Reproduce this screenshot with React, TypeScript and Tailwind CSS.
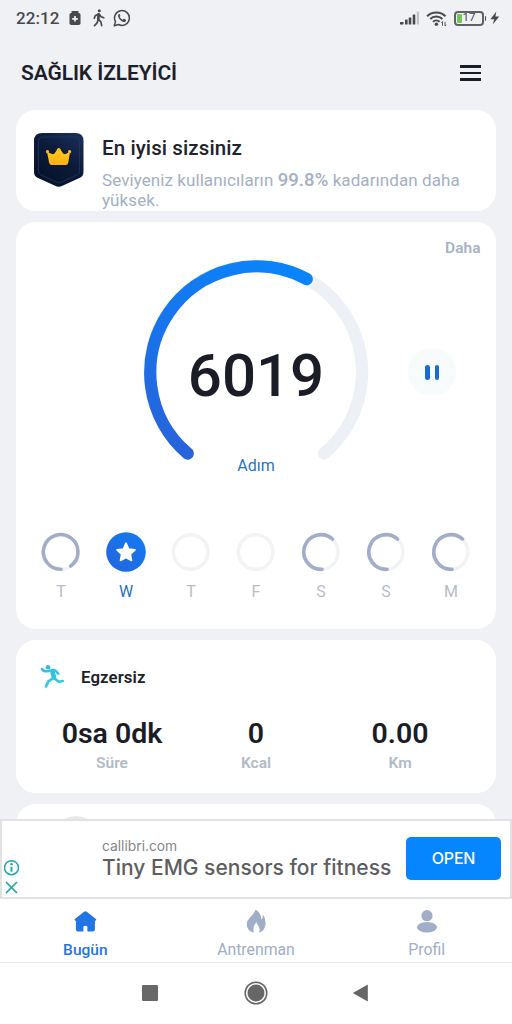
import type { ReactNode } from "react";

type Day = { label: string; kind: "arc" | "today" | "empty"; arc?: string };

const days: Day[] = [
  { label: "T", kind: "arc", arc: "M20.5 37.2 A17.3 17.3 0 1 1 30.2 34" },
  { label: "W", kind: "today" },
  { label: "T", kind: "empty" },
  { label: "F", kind: "empty" },
  { label: "S", kind: "arc", arc: "M21.5 37.3 A17.3 17.3 0 1 1 32 7" },
  { label: "S", kind: "arc", arc: "M21.5 37.3 A17.3 17.3 0 1 1 32 7" },
  { label: "M", kind: "arc", arc: "M21.5 37.3 A17.3 17.3 0 1 1 32 7" },
];

function StatusBar() {
  return (
    <header className="flex h-9 shrink-0 items-center justify-between pr-3 pl-4 text-[#48494c]">
      <div className="flex items-center">
        <span className="w-[53px] text-[17px] leading-9 font-medium tracking-[0.1px]">22:12</span>
        <svg width="12" height="16" viewBox="0 0 12 16" fill="currentColor">
          <rect x="2.5" y="1" width="7" height="2" rx=".6" />
          <rect x=".5" y="3" width="11" height="12" rx="1.8" />
          <path d="M6 6v5.6M3.2 8.8h5.6" stroke="#eff1f5" strokeWidth="1.7" />
        </svg>
        <svg className="ml-3" width="12" height="18" viewBox="0 0 12 18" fill="none" stroke="currentColor" strokeWidth="1.7" strokeLinecap="round" strokeLinejoin="round">
          <circle cx="6.3" cy="1.8" r="1.5" fill="currentColor" stroke="none" />
          <path d="M5.6 5.2 4.8 10l3 2.6.9 4M4.9 11.3l-.8 2.6-2.6 2.8M5.4 5 2.2 6.7l-.9 2.6M6.3 5.2l1.8 2.6 2.7 1" />
          <path d="M5.8 5.5 5.3 10" strokeWidth="2.6" />
        </svg>
        <svg className="ml-2" width="18" height="18" viewBox="0 0 18 18" fill="none">
          <path d="M1.3 16.7 2.5 12.6A7.4 7.4 0 1 1 5.5 15.5Z" stroke="currentColor" strokeWidth="1.5" strokeLinejoin="round" />
          <path d="M6.2 5.1c-.9.5-1.4 1.4-1 2.7.7 2.6 2.8 4.6 5.3 5.1 1.2.2 2.2-.4 2.5-1.5.1-.5-.1-.7-.5-.9l-1.3-.7c-.4-.2-.6 0-.9.4-.4.5-.6.6-1.1.3-1-.5-1.8-1.3-2.3-2.2-.3-.4 0-.6.3-1 .2-.3.3-.5.1-.9l-.5-1.1c-.2-.3-.4-.3-.6-.2Z" fill="currentColor" />
        </svg>
      </div>
      <div className="flex items-center">
        <svg width="20" height="14" viewBox="0 0 20 14" fill="currentColor">
          <rect x="0" y="11" width="3.5" height="2.5" rx=".6" />
          <rect x="5" y="8.5" width="2.6" height="5" rx=".6" />
          <rect x="8.7" y="6.5" width="2.6" height="7" rx=".6" />
          <rect x="12.7" y="3.5" width="2.6" height="10" rx=".6" />
          <rect x="16.8" y=".5" width="2.2" height="13" rx=".6" fill="#bfc0c4" />
        </svg>
        <svg className="ml-[6px]" width="21" height="17" viewBox="0 0 21 17" fill="none" stroke="currentColor" strokeWidth="2">
          <path d="M1.1 6.2a13.1 13.1 0 0 1 18.4 0" />
          <path d="M4.2 9a8.7 8.7 0 0 1 12.2 0" />
          <path d="M7 11.7a4.8 4.8 0 0 1 6.6 0" />
          <circle cx="10.4" cy="14.2" r="1.7" fill="currentColor" stroke="none" />
          <path d="M16.5 15.8v-4.2l-1.2 1.2M19 11.8V16l1.3-1.2" strokeWidth=".9" />
        </svg>
        <div className="ml-[7px] flex h-[15px] w-[30px] items-center rounded-[4px] border-2 border-[#606165] pl-px">
          <span className="h-[9px] w-[5px] rounded-[1px] bg-[#72c757]" />
          <span className="ml-px text-[11.5px] leading-none">17</span>
        </div>
        <span className="ml-px h-[5px] w-[1.5px] rounded-r bg-[#48494c]" />
        <svg className="ml-1" width="10" height="14" viewBox="0 0 10 14" fill="currentColor">
          <path d="M6.3.5.4 8.2h3.8L2.8 13.5 9.2 5.6H5.4Z" />
        </svg>
      </div>
    </header>
  );
}

function LevelBadge() {
  return (
    <svg width="50" height="55" viewBox="0 0 50 55" className="mt-[23px] shrink-0">
      <defs>
        <linearGradient id="badge" x1="1" y1="0" x2=".3" y2="1">
          <stop offset="0" stopColor="#1c315e" />
          <stop offset=".5" stopColor="#0c1b3a" />
          <stop offset="1" stopColor="#07122a" />
        </linearGradient>
        <linearGradient id="crown" x1="0" y1="0" x2="0" y2="1">
          <stop offset="0" stopColor="#ffc91a" />
          <stop offset="1" stopColor="#ffb012" />
        </linearGradient>
      </defs>
      <path d="M8 0h33.5q8 0 8 8v31q0 4-3.5 5.8L28.500 52.800q-3.700 2-7.400 0L3.500 44.800Q0 43 0 39V8Q0 0 8 0Z" fill="url(#badge)" />
      <path d="M9.500 4h31q5 0 5 5v29q0 2.500-2.300 3.800L27 49.300q-2 1-4 0L6.800 41.800Q4.500 40.500 4.500 38V9q0-5 5-5Z" fill="none" stroke="#26385c" strokeWidth=".7" />
      <g fill="url(#crown)">
        <path d="m13 19 5.800 2.200 1.700-.8 3-4.300h2.600l3 4.300 1.700.8 5.200-2.200-1.700 10.500q-.4 2.500-2.500 2.500H17.600q-2.100 0-2.500-2.500Z" />
        <circle cx="13.500" cy="18.700" r="1.600" />
        <circle cx="24.800" cy="16.600" r="1.700" />
        <circle cx="35.600" cy="18.700" r="1.600" />
      </g>
    </svg>
  );
}

function StepGauge() {
  return (
    <div className="grid h-[226px] w-[226px] place-items-center">
      <svg className="col-start-1 row-start-1" width="226" height="226" viewBox="0 0 226 226" fill="none" strokeWidth="12.3" strokeLinecap="round">
        <defs>
          <linearGradient id="steps" x1="60" y1="200" x2="150" y2="10" gradientUnits="userSpaceOnUse">
            <stop offset="0" stopColor="#2664dc" />
            <stop offset="1" stopColor="#0a84fa" />
          </linearGradient>
        </defs>
        <path d="M44.700 194.500A106.200 106.200 0 1 1 181 194.500" stroke="#edf0f5" />
        <path d="M44.700 194.500A106.200 106.200 0 0 1 163.700 20" stroke="url(#steps)" />
      </svg>
      <span className="col-start-1 row-start-1 pt-2 text-[60px] leading-none font-medium text-[#1a1d26]">6019</span>
    </div>
  );
}

function DayMark({ day }: { day: Day }) {
  return (
    <div className="flex w-[65px] flex-col items-center">
      <svg width="40" height="40" viewBox="0 0 40 40" fill="none">
        {day.kind === "today" ? (
          <>
            <defs>
              <linearGradient id="today" x1="0" y1="1" x2="1" y2="0">
                <stop offset="0" stopColor="#2365dd" />
                <stop offset="1" stopColor="#127bf2" />
              </linearGradient>
            </defs>
            <circle cx="20" cy="20" r="19.8" fill="url(#today)" />
            <path d="m20 11.200 2.700 5.800 6.300.8-4.600 4.400 1.100 6.300-5.500-3-5.500 3 1.100-6.300-4.600-4.400 6.300-.8Z" fill="#fff" stroke="#fff" strokeWidth="1.6" strokeLinejoin="round" />
          </>
        ) : (
          <circle cx="19.700" cy="20" r="17.300" stroke="#f2f3f5" strokeWidth="3.400" />
        )}
        {day.arc && <path d={day.arc} transform="translate(-.5 0)" stroke="#a3adc6" strokeWidth="3.600" strokeLinecap="round" />}
      </svg>
      <span className={day.kind === "today" ? "mt-[9px] text-base leading-[22px] text-[#2a70bf]" : "mt-[9px] text-base leading-[22px] text-[#b7bcc8]"}>
        {day.label}
      </span>
    </div>
  );
}

function Stat({ value, label }: { value: string; label: string }) {
  return (
    <div className="flex w-36 flex-col items-center">
      <span className="text-[28.5px] leading-[34px] font-semibold whitespace-nowrap text-[#1a1d24]">{value}</span>
      <span className="mt-px text-[15.5px] leading-[22px] font-semibold text-[#b2bac9]">{label}</span>
    </div>
  );
}

function Tab({ icon, label, active }: { icon: ReactNode; label: string; active?: boolean }) {
  return (
    <div className={active ? "flex flex-1 flex-col items-center text-[#1f74e6]" : "flex flex-1 flex-col items-center text-[#a2adc8]"}>
      <div className="mt-2 h-7">{icon}</div>
      <span className={active ? "mt-1 text-[15.5px] leading-[22px] font-medium" : "mt-1 text-[15.8px] leading-[22px]"}>{label}</span>
    </div>
  );
}

export default function App() {
  return (
    <div className="flex h-[1024px] w-[512px] flex-col overflow-hidden bg-[#eff1f5] font-['Roboto','Liberation_Sans',sans-serif]">
      <StatusBar />
      <div className="flex h-[74px] shrink-0 items-center justify-between pr-[31px] pl-[21px]">
        <h1 className="text-[21px] leading-8 font-semibold tracking-[-0.1px] text-[#1c1f2b]">SAĞLIK İZLEYİCİ</h1>
        <div className="flex flex-col gap-1">
          <span className="h-[2.5px] w-[21px] bg-[#1a1d26]" />
          <span className="h-[2.5px] w-[21px] bg-[#1a1d26]" />
          <span className="h-[2.5px] w-[21px] bg-[#1a1d26]" />
        </div>
      </div>

      <main className="flex h-[709px] shrink-0 flex-col gap-[11px] overflow-hidden px-4">
        <section className="flex h-[101px] shrink-0 rounded-[20px] bg-white pl-[18px]">
          <LevelBadge />
          <div className="ml-[18px] pt-[26px]">
            <h2 className="text-[20.5px] leading-6 font-medium tracking-[0.1px] text-[#20232b]">En iyisi sizsiniz</h2>
            <p className="mt-[10px] text-[17px] leading-5 tracking-[0.08px] whitespace-nowrap text-[#a4b0c3]">
              Seviyeniz kullanıcıların <span className="text-[18.5px] leading-none font-medium">99.8%</span> kadarından daha
              <br />
              yüksek.
            </p>
          </div>
        </section>

        <section className="flex h-[407px] shrink-0 flex-col rounded-[20px] bg-white">
          <div className="flex h-[37px] items-end justify-end pr-[15.5px]">
            <span className="text-[15.5px] leading-[22px] font-semibold text-[#a9b1c2]">Daha</span>
          </div>
          <div className="grid grid-cols-[1fr_226px_1fr]">
            <span />
            <StepGauge />
            <div className="flex h-[226px] items-center pl-[39px]">
              <div className="flex h-12 w-12 items-center justify-center gap-[5px] rounded-full bg-[#f8fbfc]">
                <span className="h-[15px] w-[4.5px] rounded-full bg-[#176bcb]" />
                <span className="h-[15px] w-[4.5px] rounded-full bg-[#176bcb]" />
              </div>
            </div>
          </div>
          <span className="-mt-[30px] text-center text-base leading-[22px] text-[#2a75c3]">Adım</span>
          <div className="mt-[55px] flex pl-[12.5px]">
            {days.map((day, i) => (
              <DayMark key={i} day={day} />
            ))}
          </div>
        </section>

        <section className="h-[153px] shrink-0 rounded-[20px] bg-white pt-[23px]">
          <div className="flex h-7 items-center pl-6">
            <svg className="-mt-px" width="26" height="26" viewBox="0 0 26 26" fill="none" stroke="url(#runner)" strokeLinecap="round" strokeLinejoin="round">
              <defs>
                <linearGradient id="runner" x1="0" y1="0" x2="26" y2="26" gradientUnits="userSpaceOnUse">
                  <stop offset="0" stopColor="#33b7e9" />
                  <stop offset="1" stopColor="#28d4df" />
                </linearGradient>
              </defs>
              <circle cx="8" cy="3.2" r="2.3" fill="#33b7e9" stroke="none" />
              <path d="M1.900 5Q3.500 7.600 7 7.300l6-1.400q3.200.2 5.300 3.900" strokeWidth="2.400" />
              <path d="M12.500 7.700 14 13.500" strokeWidth="4.600" />
              <path d="M12.500 14.500 8.200 17.600 6 22.500M14.500 14.500l4.300 3.200 4-.7" strokeWidth="2.600" />
            </svg>
            <h2 className="ml-[15px] text-[16.8px] leading-7 font-semibold tracking-[0.1px] text-[#1e2128]">Egzersiz</h2>
          </div>
          <div className="mt-[26px] flex justify-between px-6">
            <Stat value="0sa 0dk" label="Süre" />
            <Stat value="0" label="Kcal" />
            <Stat value="0.00" label="Km" />
          </div>
        </section>

        <section className="h-20 shrink-0 overflow-hidden rounded-[20px] bg-white pt-3 pl-[38px]">
          <div className="h-11 w-11 rounded-full bg-[#e8e9ed]" />
        </section>
      </main>

      <aside className="flex h-20 shrink-0 items-center border-2 border-[#e1e2e4] bg-white">
        <div className="flex w-[100px] shrink-0 flex-col items-start gap-[5px] pt-[37px] pl-[2px]">
          <svg width="16" height="16" viewBox="0 0 16 16" fill="none" stroke="#22a9b0" strokeWidth="1.5">
            <circle cx="7.5" cy="7.7" r="7" />
            <path d="M7.5 6.8v4.9" strokeWidth="2" />
            <circle cx="7.5" cy="4.3" r="1.2" fill="#22a9b0" stroke="none" />
          </svg>
          <svg width="16" height="14" viewBox="0 0 16 14" stroke="#22a9a7" strokeWidth="1.7">
            <path d="m2 1 11 11M13 1 2 12" />
          </svg>
        </div>
        <div className="-mt-[2px] flex w-[304px] shrink-0 flex-col font-['Inter','Roboto',sans-serif] whitespace-nowrap">
          <span className="text-[13.8px] leading-5 text-[#85868a]">callibri.com</span>
          <span className="text-[21px] leading-6 font-medium text-[#5d5e61]">Tiny EMG sensors for fitness</span>
        </div>
        <button className="-mt-px h-[43px] w-[95px] shrink-0 rounded-[5px] bg-[#0586ff] pb-0.5 font-['Inter','Roboto',sans-serif] text-base font-medium tracking-[-0.2px] text-white">OPEN</button>
      </aside>

      <nav className="flex h-16 shrink-0 border-b border-[#e8e9ec] bg-white">
        <Tab
          active
          label="Bugün"
          icon={
            <svg width="24" height="25" viewBox="0 0 24 25" fill="currentColor">
              <path d="M10.700 4.700q1.300-1 2.600 0l9.200 7.300q.9.900-.2 1.600l-.8.400v8.500q0 2-2 2H14v-4.500q0-1.200-2-1.200t-2 1.200v4.500H4.500q-2 0-2-2v-8.500l-.8-.4q-1.100-.7-.2-1.600Z" transform="translate(.4 0)" />
            </svg>
          }
        />
        <Tab
          label="Antrenman"
          icon={
            <svg width="24" height="28" viewBox="0 0 24 28" fill="currentColor">
              <path d="M11.500 2.800C15.500 5 17 8 17.500 12.500q1.500-1.500 1.500-5 3 4 2.500 10-.6 6.500-6.500 8.300 1.500-3.800-.8-7.300-1.500-1.500-1.700-3.500Q8 20 10 25.800 2.500 23.500 2.800 17C3 11.500 9.500 9 11.500 2.800Z" />
            </svg>
          }
        />
        <Tab
          label="Profil"
          icon={
            <svg width="24" height="26" viewBox="0 0 24 26" fill="currentColor">
              <circle cx="12" cy="8.7" r="5.6" />
              <ellipse cx="12" cy="20.2" rx="10" ry="5.2" />
            </svg>
          }
        />
      </nav>

      <footer className="flex h-[61px] shrink-0 items-center bg-white pb-px pl-[142px] text-[#666]">
        <span className="h-4 w-4 rounded-[1px] bg-[#686868]" />
        <svg className="ml-[86px]" width="24" height="24" viewBox="0 0 24 24">
          <circle cx="12" cy="12" r="10.8" fill="none" stroke="currentColor" strokeWidth="1.5" />
          <circle cx="12" cy="12" r="8.5" fill="currentColor" />
        </svg>
        <svg className="ml-[84px]" width="17" height="18" viewBox="0 0 17 18" fill="currentColor">
          <path d="M.8 9 15.800.5v17Z" />
        </svg>
      </footer>
    </div>
  );
}
